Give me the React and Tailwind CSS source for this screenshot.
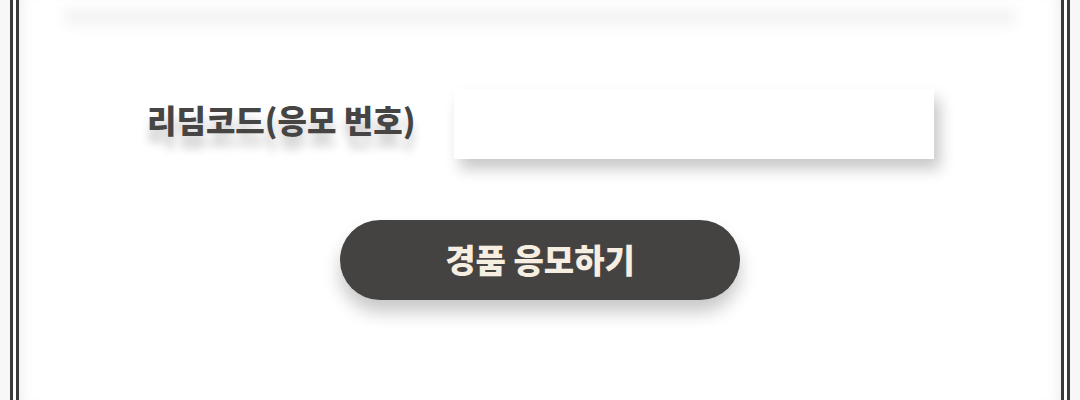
export default function App() {
  return (
    <main
      className="relative h-[400px] w-[1080px] overflow-hidden bg-[#f7f7f7] px-[10px]"
      style={{ fontFamily: '"Noto Sans CJK KR", "Noto Sans", sans-serif' }}
    >
      {/* double frame */}
      <div className="h-full border-x-[3px] border-[#3a3a3c] bg-white px-[3px]">
        <div className="relative h-full border-x-[3px] border-[#3a3a3c] bg-white shadow-[inset_12px_0_14px_-10px_rgba(0,0,0,0.08),inset_-12px_0_14px_-10px_rgba(0,0,0,0.08)]">
          {/* shadow left by the panel above */}
          <div className="absolute left-[44px] right-[44px] top-[10px] h-[14px] rounded-full bg-[#f1f1f1] blur-[7px]" />

          <div className="flex flex-col items-center pt-[89px]">
            <div className="flex items-center">
              <label className="w-[308px] pb-[10px] pl-[1px] text-[32px] font-black text-[#464543] [text-shadow:0_12px_10px_rgba(0,0,0,0.22)]">
                리딤코드(응모 번호)
              </label>
              <input
                type="text"
                className="h-[70px] w-[480px] bg-white px-4 text-xl outline-none shadow-[6px_10px_14px_rgba(0,0,0,0.22)]"
              />
            </div>

            <button className="mt-[61px] h-[80px] w-[400px] rounded-full bg-[#454341] text-[33px] font-black text-[#f7eee2] shadow-[0_12px_18px_rgba(0,0,0,0.22)]">
              경품 응모하기
            </button>
          </div>
        </div>
      </div>
    </main>
  );
}
